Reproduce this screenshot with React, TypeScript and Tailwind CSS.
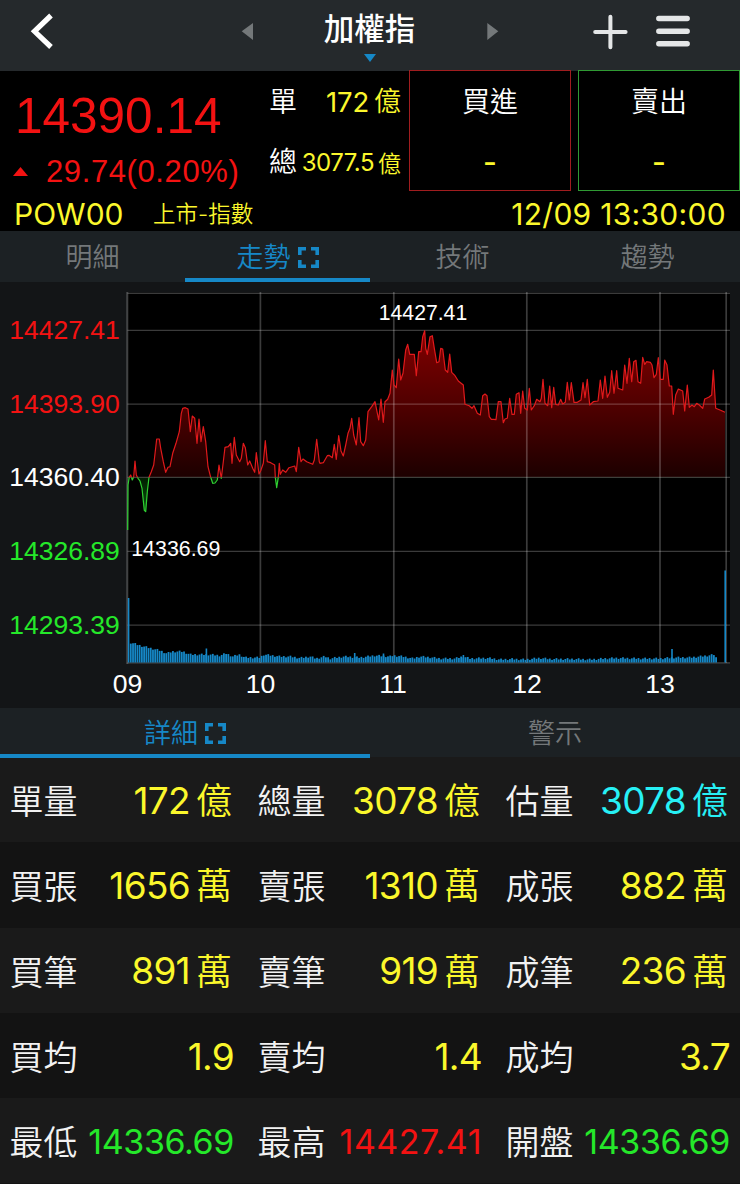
import { useId } from "react";
import clsx from "clsx";

type Point = [number, number];

const CHART_LEFT = 127.5;
const CHART_RIGHT = 730;
const BASE_Y = 477.4;
const VOLUME_Y = 662.5;

// price samples, three units per pixel, one chunk per part of the session
const trend: { x: number; samples: Point[] }[] = [
  {
    x: 120,
    samples: [
      [23, 735], [24, 600], [28, 576], [32, 570], [37, 585], [41, 576], [45, 528], [49, 570], [54, 580], [60, 588],
      [66, 610], [73, 676], [77, 680], [82, 620], [87, 577], [94, 560], [101, 540], [110, 462], [118, 462], [122, 490],
      [130, 530], [137, 562], [144, 547], [150, 545], [158, 505], [168, 475], [178, 440], [184, 385], [188, 370],
      [196, 368], [204, 372], [211, 440], [217, 393], [224, 400], [231, 475], [237, 402], [243, 470], [250, 425],
      [257, 470], [264, 545], [272, 577], [278, 595], [285, 594], [292, 585], [297, 540], [304, 580], [310, 530],
      [315, 487], [325, 485], [332, 475], [336, 535], [343, 457], [349, 510], [359, 530], [364, 520], [370, 475],
      [376, 488], [383, 540], [389, 528], [398, 550], [404, 562], [409, 503], [417, 567], [422, 557], [430, 535],
      [436, 467], [442, 530], [452, 533], [464, 540], [466, 577], [470, 608], [475, 577], [478, 535], [481, 568],
      [488, 555], [497, 562], [507, 548], [524, 543], [529, 560], [536, 487], [543, 530], [549, 522], [560, 530],
      [578, 538], [583, 525], [590, 463], [598, 530],
    ],
  },
  {
    x: 320,
    samples: [
      [0, 535], [10, 533], [22, 512], [27, 511], [37, 518], [43, 478], [49, 523], [56, 452], [63, 498], [70, 513],
      [77, 480], [84, 445], [90, 430], [95, 400], [101, 450], [109, 480], [117, 398], [122, 470], [130, 482],
      [137, 465], [144, 380], [155, 365], [165, 350], [176, 405], [183, 342], [190, 412], [195, 350], [203, 343],
      [210, 325], [217, 255], [222, 300], [229, 308], [236, 222], [242, 285], [249, 265], [257, 195], [263, 178],
      [269, 208], [283, 208], [289, 272], [296, 200], [303, 200], [308, 155], [314, 137], [317, 190], [322, 208],
      [330, 155], [337, 152], [343, 190], [350, 233], [357, 230], [362, 190], [368, 192], [376, 255], [383, 262],
      [389, 207], [395, 262], [405, 272], [415, 288], [430, 300], [435, 358], [448, 362], [456, 370], [462, 362],
      [472, 385], [481, 390], [488, 332], [495, 327], [501, 332], [508, 395], [514, 403], [521, 403], [528, 404],
      [535, 350], [543, 350], [550, 413], [555, 402], [562, 400], [569, 340], [576, 388], [583, 388], [589, 328],
      [597, 323], [602, 385], [608, 318], [614, 370], [622, 375], [628, 310],
    ],
  },
  {
    x: 520,
    samples: [
      [34, 375], [43, 362], [50, 343], [60, 350], [64, 340], [69, 283], [75, 355], [83, 362], [89, 303], [95, 368],
      [101, 307], [107, 358], [115, 360], [122, 343], [128, 357], [136, 352], [142, 292], [148, 345], [154, 293],
      [162, 352], [172, 352], [183, 345], [189, 293], [195, 338], [202, 283], [209, 360], [220, 350], [234, 348],
      [241, 285], [248, 340], [255, 273], [262, 337], [269, 322], [275, 257], [282, 325], [290, 257], [294, 310],
      [308, 315], [314, 240], [321, 295], [328, 220], [335, 290], [341, 230], [348, 226], [354, 290], [362, 295],
      [368, 217], [374, 238], [380, 230], [391, 232], [396, 240], [402, 278], [409, 268], [415, 218], [421, 283],
      [430, 283], [434, 225], [441, 240], [448, 303], [455, 303], [460, 388], [467, 330], [475, 312], [488, 318],
      [494, 378], [502, 300], [508, 367], [516, 360], [523, 365], [530, 355], [538, 360], [548, 370], [554, 342],
      [566, 337], [575, 330], [580, 255], [587, 370], [600, 375], [615, 382],
    ],
  },
];

// [x, bar height]
const volume: Point[] = [
  [130, 20], [134, 19], [140, 17], [150, 14.5], [160, 12], [167, 9], [172, 11], [183, 11], [190, 8], [200, 8],
  [210, 8], [220, 7], [226, 9], [233, 6], [239, 8], [245, 5], [260, 5], [264, 8], [272, 7], [280, 6], [290, 6],
  [300, 4.5], [310, 6], [316, 4], [325, 6], [330, 4], [344, 6], [360, 5], [375, 7], [390, 6], [393, 7], [403, 6],
  [413, 4], [420, 6], [432, 5], [440, 4], [455, 4], [463, 6], [470, 4], [488, 4.5], [500, 3], [512, 3.5], [525, 3],
  [540, 4.5], [550, 3.5], [575, 3.5], [590, 3], [605, 4], [617, 4.5], [640, 4], [660, 4], [675, 5], [690, 5],
  [700, 6], [712, 7.5], [714.5, 8], [717, 3],
];

const volumePeaks: Point[] = [
  [128.6, 64.5], [206.4, 14], [354.7, 9.5], [383.5, 9], [463.4, 7.5], [672, 13.5], [725.2, 92],
];

const gridX = [260.4, 393.8, 526.8, 660, 726.2];
const gridY = [293.3, 330.4, 404.2, 477.4, 551.4, 625.2, 662.8];

const priceLabels = [
  { text: "14427.41", y: 339, fill: "#f31212" },
  { text: "14393.90", y: 413, fill: "#f31212" },
  { text: "14360.40", y: 486, fill: "#ffffff" },
  { text: "14326.89", y: 560, fill: "#25e82a" },
  { text: "14293.39", y: 634, fill: "#25e82a" },
];

const hours = [
  { text: "09", x: 127.5 },
  { text: "10", x: 260.5 },
  { text: "11", x: 393 },
  { text: "12", x: 527 },
  { text: "13", x: 660 },
];

type Cell = { label: string; value: string; unit?: string; color: string; size?: string };

const YELLOW = "text-[#fbf72c]";
const CYAN = "text-[#27f0f5]";
const GREEN = "text-[#25e82a]";
const RED = "text-[#f31212]";

const details: Cell[][] = [
  [
    { label: "單量", value: "172", unit: "億", color: YELLOW },
    { label: "總量", value: "3078", unit: "億", color: YELLOW },
    { label: "估量", value: "3078", unit: "億", color: CYAN },
  ],
  [
    { label: "買張", value: "1656", unit: "萬", color: YELLOW },
    { label: "賣張", value: "1310", unit: "萬", color: YELLOW },
    { label: "成張", value: "882", unit: "萬", color: YELLOW },
  ],
  [
    { label: "買筆", value: "891", unit: "萬", color: YELLOW },
    { label: "賣筆", value: "919", unit: "萬", color: YELLOW },
    { label: "成筆", value: "236", unit: "萬", color: YELLOW },
  ],
  [
    { label: "買均", value: "1.9", color: YELLOW },
    { label: "賣均", value: "1.4", color: YELLOW },
    { label: "成均", value: "3.7", color: YELLOW },
  ],
  [
    { label: "最低", value: "14336.69", color: GREEN, size: "text-[34px] tracking-[-0.4px]" },
    { label: "最高", value: "14427.41", color: RED, size: "text-[34px] tracking-[0.5px]" },
    { label: "開盤", value: "14336.69", color: GREEN, size: "text-[34px] tracking-[-0.4px]" },
  ],
];

const trendPoints: Point[] = trend.flatMap(({ x, samples }) =>
  samples.map(([sx, sy]): Point => [x + sx / 3, 285 + sy / 3])
);

function volumeAt(x: number) {
  const i = volume.findIndex(([vx]) => vx >= x);
  if (i <= 0) return volume[0][1];
  const [x0, h0] = volume[i - 1];
  const [x1, h1] = volume[i];
  return h0 + ((h1 - h0) * (x - x0)) / (x1 - x0);
}

function volumeBars(): Point[] {
  const bars: Point[] = [];
  for (let i = 0; i < 265; i++) {
    const x = 130.8 + i * 2.217;
    if (x > 717) break;
    const jitter = ((i * 7) % 5) * 0.45 - 0.9;
    bars.push([x, Math.max(2, volumeAt(x) + jitter)]);
  }
  return bars;
}

function ExpandIcon() {
  return (
    <svg className="h-[21px] w-[21px]" viewBox="0 0 21 21" fill="none" stroke="#1688c7" strokeWidth="3.6">
      <path d="M1.8 8V1.8H8M13 1.8h6.2V8M19.2 13v6.2H13M8 19.2H1.8V13" />
    </svg>
  );
}

function Tab({ label, active }: { label: string; active?: boolean }) {
  return (
    <div
      className={clsx(
        "flex flex-1 items-center justify-center gap-[7px] border-b-4 pt-[5px] text-[27px] font-[350] leading-none",
        active ? "border-[#1688c7] text-[#1688c7]" : "border-transparent text-[#74787a]"
      )}
    >
      <span>{label}</span>
      {active && <ExpandIcon />}
    </div>
  );
}

function Header() {
  return (
    <header className="flex h-[71px] items-start bg-[#25292c]">
      <svg className="h-[71px] w-[240px]" viewBox="0 0 240 71" fill="none">
        <path d="M51 15.5L34.5 31.3 51 47" stroke="#fff" strokeWidth="5.2" />
      </svg>
      <svg className="h-[71px] w-[70px]" viewBox="240 0 70 71">
        <path d="M241.7 31.3L253 23v17z" fill="#74787a" />
      </svg>
      <div className="flex w-[118px] flex-col items-center pl-px pt-[11px]">
        <h1 className="whitespace-nowrap text-[30.5px] font-medium leading-[36px] text-white">加權指</h1>
        <svg className="mt-[7px] h-[8px] w-[12px]" viewBox="0 0 12 8">
          <path d="M0 0h12L6 8z" fill="#1688c7" />
        </svg>
      </div>
      <svg className="h-[71px] w-[152px]" viewBox="428 0 152 71">
        <path d="M498.3 31.3L487.3 23v17z" fill="#74787a" />
      </svg>
      <svg className="h-[71px] w-[160px]" viewBox="580 0 160 71" stroke="#e4e6e7" strokeLinecap="round">
        <path d="M595.2 32h30.4M610.4 16.8v30.4" strokeWidth="4" />
        <path d="M658.8 18.5h28.4M658.8 31.2h28.4M658.8 43.8h28.4" strokeWidth="5.4" />
      </svg>
    </header>
  );
}

function TradeBox({ label, border }: { label: string; border: string }) {
  return (
    <div className={clsx("flex h-[121px] w-[162px] flex-col items-center border", border)}>
      <span className="mt-[16px] text-[28px] font-[350] leading-[30px] text-white">{label}</span>
      <span className="mt-[28px] h-[34px] text-[30px] font-medium leading-[34px] text-[#fbf72c]">-</span>
    </div>
  );
}

function Quote() {
  return (
    <section className="flow-root h-[160px] bg-black text-[#fbf72c]">
      <div className="-mt-px flex h-[121px]">
        <div className="w-[262px] font-['Liberation_Sans'] text-[#f31212]">
          <div className="mt-[20px] pl-[15px] text-[49.5px] leading-[52px]">14390.14</div>
          <div className="mt-[12px] flex items-center pl-[13px]">
            <svg className="mb-[2px] h-[9px] w-[15px]" viewBox="0 0 15 9">
              <path d="M7.5 0L15 9H0z" fill="#f31212" />
            </svg>
            <span className="ml-[18px] text-[31px] leading-[36px] tracking-[0.6px]">29.74(0.20%)</span>
          </div>
        </div>
        <div className="w-[147px] pl-[7px] pr-[8px]">
          <div className="mt-[16px] flex h-[32px] items-center leading-[32px]">
            <span className="text-[28px] font-[350] text-white">單</span>
            <span className="ml-auto text-[27.5px] tracking-[-0.2px]">172</span>
            <span className="ml-[5px] text-[27px] font-[350]">億</span>
          </div>
          <div className="mt-[28px] flex h-[32px] items-center leading-[32px]">
            <span className="text-[28px] font-[350] text-white">總</span>
            <span className="ml-auto pt-[2px] text-[24px] tracking-[-0.5px]">3077.5</span>
            <span className="ml-[4px] pt-[3px] text-[23px] font-[350]">億</span>
          </div>
        </div>
        <TradeBox label="買進" border="border-[#a01d1f]" />
        <div className="w-[7px]" />
        <TradeBox label="賣出" border="border-[#2f9a33]" />
      </div>
      <div className="flex h-[40px] items-center pl-[14px] pr-[14px] pt-[6px] text-[30px] leading-[34px]">
        <span className="w-[111px]">POW00</span>
        <span className="ml-[28px] pb-px text-[22.5px] font-[350]">上市-指數</span>
        <span className="ml-auto tracking-[0.3px]">12/09 13:30:00</span>
      </div>
    </section>
  );
}

function Chart() {
  const id = useId();
  const line = trendPoints.map(([x, y]) => `${x.toFixed(1)},${y.toFixed(1)}`).join(" ");
  const area = `${CHART_LEFT},${BASE_Y} ${line} 725,${BASE_Y}`;

  return (
    <svg
      className="block h-[426px] w-[740px] bg-[#131517]"
      viewBox="0 282 740 426"
      fontFamily="'Liberation Sans', Arial, sans-serif"
    >
      <defs>
        <linearGradient id={`${id}-up`} gradientUnits="userSpaceOnUse" x1="0" y1="330" x2="0" y2={BASE_Y}>
          <stop offset="0" stopColor="#820000" />
          <stop offset="0.55" stopColor="#4c0000" />
          <stop offset="1" stopColor="#1c0000" />
        </linearGradient>
        <linearGradient id={`${id}-down`} gradientUnits="userSpaceOnUse" x1="0" y1={BASE_Y} x2="0" y2="515">
          <stop offset="0" stopColor="#001c00" />
          <stop offset="1" stopColor="#0b5c10" />
        </linearGradient>
        <clipPath id={`${id}-above`}>
          <rect x="120" y="285" width="620" height={BASE_Y - 285} />
        </clipPath>
        <clipPath id={`${id}-below`}>
          <rect x="120" y={BASE_Y} width="620" height="100" />
        </clipPath>
      </defs>

      <rect x={CHART_LEFT} y="292.5" width={CHART_RIGHT - CHART_LEFT} height="370" fill="#000" />

      <g clipPath={`url(#${id}-above)`}>
        <polygon points={area} fill={`url(#${id}-up)`} />
      </g>
      <g clipPath={`url(#${id}-below)`}>
        <polygon points={area} fill={`url(#${id}-down)`} />
      </g>

      {/* Grid */}
      <g stroke="#fff" strokeOpacity="0.23">
        {gridY.map((y) => (
          <line key={y} x1={CHART_LEFT} x2={CHART_RIGHT} y1={y} y2={y} strokeWidth="1.3" />
        ))}
        {gridX.map((x) => (
          <line key={x} x1={x} x2={x} y1="292" y2="663" strokeWidth="1.7" />
        ))}
        <line x1="127.3" x2="127.3" y1="292" y2="664" strokeWidth="2" />
      </g>

      <g fill="none" strokeWidth="1.2" strokeLinejoin="round">
        <polyline points={line} stroke="#e0191b" clipPath={`url(#${id}-above)`} />
        <polyline points={line} stroke="#2fd032" clipPath={`url(#${id}-below)`} />
      </g>

      {/* Volume */}
      <g fill="#1688c7">
        {volumeBars().map(([x, h]) => (
          <rect key={x} x={x - 0.9} y={VOLUME_Y - h} width="1.8" height={h} />
        ))}
        {volumePeaks.map(([x, h]) => (
          <rect key={x} x={x - 0.8} y={VOLUME_Y - h} width="1.6" height={h} />
        ))}
      </g>

      {/* Axis labels */}
      {priceLabels.map(({ text, y, fill }) => (
        <text key={text} x="9.3" y={y} fontSize="26.5" fill={fill}>
          {text}
        </text>
      ))}
      {hours.map(({ text, x }) => (
        <text key={text} x={x} y="693" fontSize="26.6" textAnchor="middle" fill="#fff">
          {text}
        </text>
      ))}
      <text x="378.8" y="320" fontSize="21.2" fill="#fff">14427.41</text>
      <text x="131.2" y="555.5" fontSize="21.4" fill="#fff">14336.69</text>
    </svg>
  );
}

function DetailCell({ cell }: { cell: Cell }) {
  return (
    <div className="flex h-full items-center pl-[9.6px]">
      <span className="pt-[2px] text-[34px] font-[350] leading-none text-[#f2f2f2]">{cell.label}</span>
      <span
        className={clsx(
          "ml-auto leading-none",
          cell.color,
          cell.size ?? "pb-[2px] text-[37px] tracking-[-0.7px]",
          !cell.unit && "-mr-[2px]"
        )}
      >
        {cell.value}
      </span>
      {cell.unit && (
        <span className={clsx("ml-[6px] text-[36px] font-[350] leading-none", cell.color)}>{cell.unit}</span>
      )}
    </div>
  );
}

export default function App() {
  return (
    <div className="h-[1184px] w-[740px] overflow-hidden bg-[#131313] font-[Inter,'Noto_Sans_CJK_TC',sans-serif]">
      <Header />
      <Quote />
      <nav className="flex h-[51px] bg-[#1c2124]">
        <Tab label="明細" />
        <Tab label="走勢" active />
        <Tab label="技術" />
        <Tab label="趨勢" />
      </nav>
      <Chart />
      <nav className="flex h-[50px] bg-[#1c2124]">
        <Tab label="詳細" active />
        <Tab label="警示" />
      </nav>
      <div className="-mt-px">
        {details.map((row, i) => (
          <div
            key={i}
            className={clsx(
              "grid h-[85.3px] grid-cols-[232px_232px_232px] gap-x-[16px] pt-[3px]",
              i % 2 === 0 ? "bg-[#1a1a1a]" : "bg-[#131313]"
            )}
          >
            {row.map((cell) => (
              <DetailCell key={cell.label} cell={cell} />
            ))}
          </div>
        ))}
      </div>
    </div>
  );
}
